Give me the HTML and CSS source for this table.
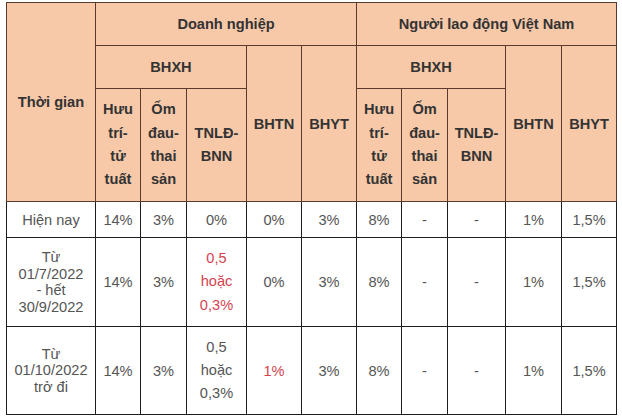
FILE: index.html
```html
<!DOCTYPE html>
<html lang="vi">
<head>
<meta charset="utf-8">
<title>Bảng tỷ lệ đóng bảo hiểm</title>
<link rel="stylesheet" href="styles.css">
</head>
<body>
<table class="rates">
  <colgroup>
    <col class="c-time">
    <col class="c-45"><col class="c-46"><col class="c-60"><col class="c-55"><col class="c-55">
    <col class="c-45"><col class="c-46"><col class="c-58"><col class="c-56"><col class="c-55">
  </colgroup>
  <thead>
    <tr class="h1">
      <th rowspan="3">Thời gian</th>
      <th colspan="5">Doanh nghiệp</th>
      <th colspan="5">Người lao động Việt Nam</th>
    </tr>
    <tr class="h2">
      <th colspan="3">BHXH</th>
      <th rowspan="2">BHTN</th>
      <th rowspan="2">BHYT</th>
      <th colspan="3">BHXH</th>
      <th rowspan="2">BHTN</th>
      <th rowspan="2">BHYT</th>
    </tr>
    <tr class="h3">
      <th class="multi">Hưu<br>trí-<br>tử<br>tuất</th>
      <th class="multi">Ốm<br>đau-<br>thai<br>sản</th>
      <th class="multi">TNLĐ-<br>BNN</th>
      <th class="multi">Hưu<br>trí-<br>tử<br>tuất</th>
      <th class="multi">Ốm<br>đau-<br>thai<br>sản</th>
      <th class="multi">TNLĐ-<br>BNN</th>
    </tr>
  </thead>
  <tbody>
    <tr class="r1">
      <td>Hiện nay</td>
      <td>14%</td><td>3%</td><td>0%</td><td>0%</td><td>3%</td>
      <td>8%</td><td>-</td><td>-</td><td>1%</td><td>1,5%</td>
    </tr>
    <tr class="r2">
      <td class="date">Từ<br>01/7/2022<br>- hết<br>30/9/2022</td>
      <td>14%</td><td>3%</td><td class="multi red">0,5<br>hoặc<br>0,3%</td><td>0%</td><td>3%</td>
      <td>8%</td><td>-</td><td>-</td><td>1%</td><td>1,5%</td>
    </tr>
    <tr class="r3">
      <td class="date">Từ<br>01/10/2022<br>trở đi</td>
      <td>14%</td><td>3%</td><td class="multi">0,5<br>hoặc<br>0,3%</td><td class="red">1%</td><td>3%</td>
      <td>8%</td><td>-</td><td>-</td><td>1%</td><td>1,5%</td>
    </tr>
  </tbody>
</table>
</body>
</html>
```

FILE: styles.css
```css
html, body {
  margin: 0;
  padding: 0;
  background: #ffffff;
}

body {
  padding: 2px 0 0 6px;
  font-family: "Liberation Sans", Arial, sans-serif;
}

.rates {
  border-collapse: collapse;
  table-layout: fixed;
  width: 611px;
  font-size: 14.6px;
}

.c-time { width: 89px; }
.c-45 { width: 45px; }
.c-46 { width: 46px; }
.c-55 { width: 55px; }
.c-56 { width: 56px; }
.c-58 { width: 58px; }
.c-60 { width: 60px; }

.rates th,
.rates td {
  padding: 0 4px;
  text-align: center;
  vertical-align: middle;
  line-height: 18px;
  overflow: hidden;
}

.rates th {
  background: #f7c9a9;
  color: #333333;
  font-weight: bold;
  border: 1px solid #5a3a2c;
}

.rates td {
  background: #ffffff;
  color: #555555;
  font-weight: normal;
  border: 1px solid #1e1e1e;
}

.rates .multi {
  line-height: 23.3px;
}

.rates .date {
  line-height: 16.5px;
}

.rates .red {
  color: #d4434f;
}

.h1 { height: 43px; }
.h2 { height: 43px; }
.h3 { height: 113px; }
.r1 { height: 36px; }
.r2 { height: 89px; }
.r3 { height: 88px; }
```
